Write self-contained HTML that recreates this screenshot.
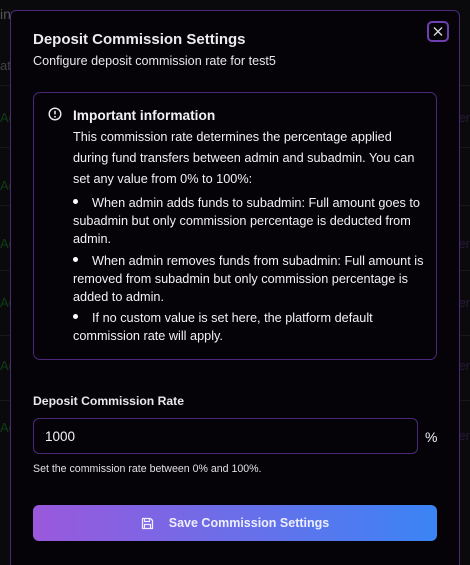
<!DOCTYPE html>
<html style="overflow:hidden;width:470px;height:565px"><head><meta charset="utf-8"><style>
*{box-sizing:border-box;margin:0;padding:0}
body{width:470px;height:565px;overflow:hidden;background:#0c0c0f;font-family:"Liberation Sans",sans-serif;color:#f2f2f5;position:relative}
.bg{position:absolute;left:0;top:0;width:470px;height:565px;background:#0a0a0d}
.bgline{position:absolute;left:0;width:470px;height:1px;background:#17171b}
.bgt{position:absolute;left:0;font-size:13px;color:#123a18}
.bgr{position:absolute;right:0;font-size:13px;color:#2a1a3a}
.modal{position:absolute;left:10px;top:10px;width:450px;height:562px;background:#050308;border:1px solid #4a2a78;border-bottom:none;border-radius:6px 6px 0 0}
.close{position:absolute;left:427px;top:21px;width:22px;height:21px;border:2px solid #6d3fb0;border-radius:5px}
h1{position:absolute;left:33px;top:31px;font-size:15px;font-weight:bold;color:#ececf0}
.sub{position:absolute;left:33px;top:54px;font-size:12.6px;color:#e8e8ec}
.info{position:absolute;left:33px;top:92px;width:404px;height:268px;border:1px solid #4a2a78;border-radius:7px;background:#050308}
.ic{position:absolute;left:48px;top:107px}
.it{position:absolute;left:73px;top:108px;font-size:13.7px;font-weight:bold}
.p{position:absolute;left:73px;top:127px;width:345px;font-size:12.7px;line-height:21px}
ul{position:absolute;left:73px;top:194px;width:356px;font-size:12.7px;line-height:18px;list-style:none}
li{margin-bottom:3.5px;position:relative}
li:before{content:"";display:inline-block;width:5px;height:5px;border-radius:50%;background:#fff;margin-right:14px;vertical-align:middle;position:relative;top:-2px}
.lbl{position:absolute;left:33px;top:394px;font-size:12.2px;font-weight:bold;color:#e8e8ec}
.inp{position:absolute;left:33px;top:418px;width:385px;height:36px;border:1px solid #4a2a78;border-radius:6px;font-size:13.5px;padding:10px 11px}
.pct{position:absolute;left:425px;top:429px;font-size:14px}
.hint{position:absolute;left:33px;top:463px;font-size:10.6px;color:#e0e0e4}
.btn{position:absolute;left:33px;top:505px;width:404px;height:36px;border-radius:6px;background:linear-gradient(90deg,#9a58dc,#3b84f5);font-size:12.5px;font-weight:bold;color:#eef;display:flex;align-items:center;justify-content:center;gap:15px}
</style></head><body>
<div class="bg"></div>
<div class="bgline" style="top:85px"></div><div class="bgline" style="top:147px"></div><div class="bgline" style="top:205px"></div><div class="bgline" style="top:270px"></div><div class="bgline" style="top:335px"></div><div class="bgline" style="top:400px"></div>
<div class="bgt" style="top:6px;color:#555;font-size:14px">in</div>
<div class="bgt" style="top:58px;color:#444">at</div>
<div class="bgt" style="top:110px">Ac</div><div class="bgt" style="top:178px">Ac</div><div class="bgt" style="top:236px">Ac</div><div class="bgt" style="top:295px">Ac</div><div class="bgt" style="top:358px">Ac</div><div class="bgt" style="top:420px">Ac</div>
<div class="bgr" style="top:110px">er</div><div class="bgr" style="top:236px">er</div><div class="bgr" style="top:295px">er</div><div class="bgr" style="top:358px">er</div><div class="bgr" style="top:428px">er</div>
<div class="modal"></div>
<div class="close"><svg width="18" height="17" viewBox="0 0 18 17"><path d="M5 4.5l8 8M13 4.5l-8 8" stroke="#ddd" stroke-width="1.3"/></svg></div>
<h1>Deposit Commission Settings</h1>
<div class="sub">Configure deposit commission rate for test5</div>
<div class="info"></div>
<svg class="ic" width="14" height="14" viewBox="0 0 14 14"><circle cx="7" cy="7" r="5.8" fill="none" stroke="#eee" stroke-width="1.4"/><path d="M7 3.8v3.6" stroke="#eee" stroke-width="1.5"/><circle cx="7" cy="9.8" r=".9" fill="#eee"/></svg>
<div class="it">Important information</div>
<div class="p">This commission rate determines the percentage applied during fund transfers between admin and subadmin. You can set any value from 0% to 100%:</div>
<ul>
<li>When admin adds funds to subadmin: Full amount goes to subadmin but only commission percentage is deducted from admin.</li>
<li>When admin removes funds from subadmin: Full amount is removed from subadmin but only commission percentage is added to admin.</li>
<li>If no custom value is set here, the platform default commission rate will apply.</li>
</ul>
<div class="lbl">Deposit Commission Rate</div>
<div class="inp">1000</div>
<div class="pct">%</div>
<div class="hint">Set the commission rate between 0% and 100%.</div>
<div class="btn"><svg width="13" height="13" viewBox="0 0 13 13"><path d="M1.5 1.5h8l2 2v8h-10z" fill="none" stroke="#eef" stroke-width="1.3" stroke-linejoin="round"/><path d="M3.5 1.5v3h5v-3M3.5 11.5v-4h6v4" fill="none" stroke="#eef" stroke-width="1.2"/></svg><span>Save Commission Settings</span></div>
</body></html>
